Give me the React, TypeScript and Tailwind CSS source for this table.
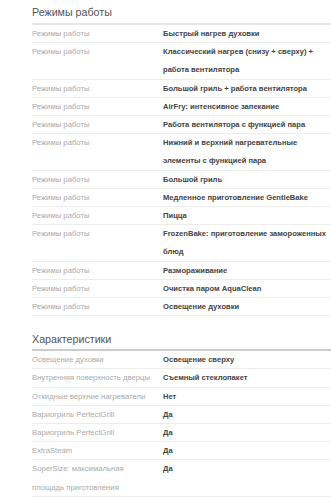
const modes = [
  "Быстрый нагрев духовки",
  "Классический нагрев (снизу + сверху) + работа вентилятора",
  "Большой гриль + работа вентилятора",
  "AirFry: интенсивное запекание",
  "Работа вентилятора с функцией пара",
  "Нижний и верхний нагревательные элементы с функцией пара",
  "Большой гриль",
  "Медленное приготовление GentleBake",
  "Пицца",
  "FrozenBake: приготовление замороженных блюд",
  "Размораживание",
  "Очистка паром AquaClean",
  "Освещение духовки",
];

const specs: [string, string][] = [
  ["Освещение духовки", "Освещение сверху"],
  ["Внутренняя поверхность дверцы", "Съемный стеклопакет"],
  ["Откидные верхние нагреватели", "Нет"],
  ["Вариогриль PerfectGrill", "Да"],
  ["Вариогриль PerfectGrill", "Да"],
  ["ExtraSteam", "Да"],
  ["SuperSize: максимальная площадь приготовления", "Да"],
];

type RowProps = { label: string; value: string };

const Row = ({ label, value }: RowProps) => (
  <div className="grid grid-cols-[131px_1fr] leading-[18.2px] shadow-[inset_0_-1px_0_#ececec]">
    <div className="text-[7.7px] text-[#aaaaaa] pr-2">{label}</div>
    <div className="text-[7.6px] font-bold text-[#444444]">{value}</div>
  </div>
);

export default function App() {
  return (
    <main
      className="w-[331px] h-[500px] overflow-hidden bg-white pl-[32px]"
      style={{ fontFamily: '"Liberation Sans", Arial, sans-serif' }}
    >
      <section>
        <h3 className="text-[10.7px] leading-[16px] pt-[4px] pb-[3px] text-[#555555] border-b-2 border-[#e6e6e6]">
          Режимы работы
        </h3>
        {modes.map((m, i) => (
          <Row key={i} label="Режимы работы" value={m} />
        ))}
      </section>
      <section className="mt-[15px]">
        <h3 className="text-[10.7px] leading-[16px] pb-[2px] text-[#555555] border-b-2 border-[#cccccc]">
          Характеристики
        </h3>
        {specs.map(([l, v], i) => (
          <Row key={i} label={l} value={v} />
        ))}
      </section>
    </main>
  );
}
